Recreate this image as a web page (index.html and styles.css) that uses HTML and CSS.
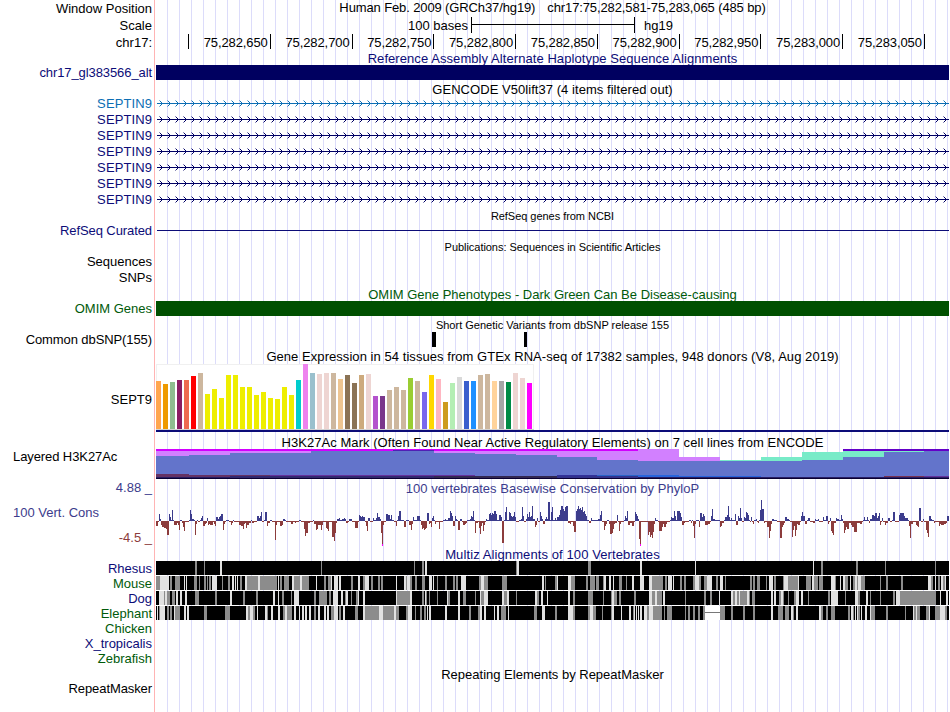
FILE: index.html
```
<!DOCTYPE html>
<html lang="en">
<head>
    <meta charset="UTF-8">
    <meta name="viewport" content="width=device-width, initial-scale=1.0">
    <title>Human chr17:75,282,581-75,283,065</title>
    <link rel="stylesheet" href="styles.css">
</head>
<body>
    <main class="browser">
        <div class="row ruler">
            <div class="label">Window Position</div>
            <div class="title position"><span>Human Feb. 2009 (GRCh37/hg19)</span><span>chr17:75,282,581-75,283,065 (485 bp)</span></div>
        </div>
        <div class="row ruler">
            <div class="label">Scale</div>
            <div class="scale"><span class="bases">100 bases</span><span class="bracket"></span><span>hg19</span></div>
        </div>
        <div class="row ruler">
            <div class="label">chr17:</div>
            <div class="ticks">
                <span class="first"></span>
                <span>75,282,650</span><span>75,282,700</span><span>75,282,750</span>
                <span>75,282,800</span><span>75,282,850</span><span>75,282,900</span>
                <span>75,282,950</span><span>75,283,000</span><span>75,283,050</span>
            </div>
        </div>

        <div class="title navy t-alt">Reference Assembly Alternate Haplotype Sequence Alignments</div>
        <div class="row item">
            <div class="label navy tight">chr17_gl383566_alt</div>
            <div class="bar bar-navy"></div>
        </div>

        <div class="title t-gencode">GENCODE V50lift37 (4 items filtered out)</div>
        <div class="row gene"><div class="label blue">SEPTIN9</div><svg class="arrows blue"></svg></div>
        <div class="row gene"><div class="label navy">SEPTIN9</div><svg class="arrows"></svg></div>
        <div class="row gene"><div class="label navy">SEPTIN9</div><svg class="arrows"></svg></div>
        <div class="row gene"><div class="label navy">SEPTIN9</div><svg class="arrows"></svg></div>
        <div class="row gene"><div class="label navy">SEPTIN9</div><svg class="arrows"></svg></div>
        <div class="row gene"><div class="label navy">SEPTIN9</div><svg class="arrows"></svg></div>
        <div class="row gene"><div class="label navy">SEPTIN9</div><svg class="arrows"></svg></div>

        <div class="title small t-refseq">RefSeq genes from NCBI</div>
        <div class="row item">
            <div class="label navy tight">RefSeq Curated</div>
            <div class="intron"></div>
        </div>

        <div class="title small t-pubs">Publications: Sequences in Scientific Articles</div>
        <div class="row pub"><div class="label">Sequences</div></div>
        <div class="row pub"><div class="label">SNPs</div></div>

        <div class="title green t-omim">OMIM Gene Phenotypes - Dark Green Can Be Disease-causing</div>
        <div class="row item">
            <div class="label green">OMIM Genes</div>
            <div class="bar bar-green"></div>
        </div>

        <div class="title small t-snp">Short Genetic Variants from dbSNP release 155</div>
        <div class="row item">
            <div class="label tight">Common dbSNP(155)</div>
            <div class="snps"><i class="snp"></i><i class="snp narrow"></i></div>
        </div>

        <div class="title t-gtex">Gene Expression in 54 tissues from GTEx RNA-seq of 17382 samples, 948 donors (V8, Aug 2019)</div>
        <div class="row gtex-row">
            <div class="label">SEPT9</div>
            <div class="gtex"><svg id="gtex" width="378" height="66"></svg></div>
        </div>

        <div class="title t-h3k">H3K27Ac Mark (Often Found Near Active Regulatory Elements) on 7 cell lines from ENCODE</div>
        <div class="row h3k-row">
            <div class="label left tight">Layered H3K27Ac</div>
            <svg id="h3k" width="793" height="30"></svg>
        </div>

        <div class="row cons-row">
            <div class="cons-labels">
                <span class="max">4.88 _</span>
                <span class="name">100 Vert. Cons</span>
                <span class="min">-4.5 _</span>
            </div>
            <div>
                <div class="title in-row phylo">100 vertebrates Basewise Conservation by PhyloP</div>
                <svg id="phylop" width="793" height="50"></svg>
            </div>
        </div>

        <div class="title navy t-multiz">Multiz Alignments of 100 Vertebrates</div>
        <div class="row species"><div class="label navy">Rhesus</div><svg id="rhesus" class="align"></svg></div>
        <div class="row species"><div class="label green">Mouse</div><svg id="mouse" class="align"></svg></div>
        <div class="row species"><div class="label navy">Dog</div><svg id="dog" class="align"></svg></div>
        <div class="row species"><div class="label green">Elephant</div><svg id="elephant" class="align"></svg></div>
        <div class="row species"><div class="label green">Chicken</div></div>
        <div class="row species"><div class="label navy">X_tropicalis</div></div>
        <div class="row species"><div class="label green">Zebrafish</div></div>

        <div class="title t-repeat">Repeating Elements by RepeatMasker</div>
        <div class="row item"><div class="label tight">RepeatMasker</div></div>
    </main>
    <script src="script.js"></script>
</body>
</html>
```
FILE: styles.css
```
body {
    margin: 0;
    background-color: #fff;
    font-family: 'Liberation Sans', Arial, sans-serif;
    font-size: 13px;
    color: #000;
}
.browser {
    width: 949px;
    height: 712px;
    overflow: hidden;
    background-image:
        linear-gradient(#ffb4b4, #ffb4b4),
        repeating-linear-gradient(to right, transparent 0, transparent 11px, #dcdcfa 11px, #dcdcfa 12px);
    background-size: 1px 712px, 793px 712px;
    background-position: 154px 0, 156px 0;
    background-repeat: no-repeat;
}
svg {
    display: block;
    shape-rendering: crispEdges;
}

/* rows */
.row {
    display: grid;
    grid-template-columns: 156px 793px;
}
.label {
    padding-right: 4px;
    text-align: right;
    white-space: nowrap;
}
.label.left {
    padding-left: 13px;
    text-align: left;
}
.label.tight {
    letter-spacing: -0.09px;
}
.ruler {
    height: 17px;
    line-height: 17px;
}
.item {
    height: 15px;
    line-height: 15px;
}
.gene {
    height: 16px;
    line-height: 17px;
}
.gene .label {
    letter-spacing: 0.1px;
}
.pub {
    height: 16px;
    line-height: 16px;
}
.species {
    height: 15px;
    line-height: 15px;
}

/* track titles */
.title {
    margin-left: 156px;
    text-align: center;
    white-space: nowrap;
    height: 15px;
    line-height: 15px;
}
.row .title {
    margin-left: 0;
}
.small {
    font-size: 11px;
    letter-spacing: -0.04px;
}
.position {
    display: flex;
    justify-content: center;
    gap: 12px;
    letter-spacing: -0.12px;
}
.t-alt { height: 14px; letter-spacing: 0.07px; }
.t-gencode { padding-top: 2px; height: 13px; letter-spacing: 0.05px; }
.t-refseq { padding-top: 2px; height: 14px; }
.t-pubs { padding-top: 2px; height: 14px; }
.t-omim { padding-top: 1px; height: 14px; }
.t-snp { padding-top: 2px; height: 14px; letter-spacing: 0; }
.t-gtex { padding-top: 2px; letter-spacing: 0.055px; }
.t-h3k { padding-top: 3px; height: 14px; letter-spacing: 0.05px; }
.t-multiz { height: 14px; letter-spacing: 0.1px; }
.t-repeat { padding-top: 1px; height: 14px; }

.navy { color: #0c0c78; }
.blue { color: #0c6eb4; }
.green { color: #005a0a; }
.phylo { color: #3c3c8c; }

/* base position */
.scale {
    display: flex;
    padding-left: 252px;
}
.bases {
    width: 63px;
    white-space: nowrap;
}
.bracket {
    box-sizing: border-box;
    width: 164px;
    height: 16px;
    margin-right: 9px;
    border-left: 1px solid #000;
    border-right: 1px solid #000;
    background: linear-gradient(#000, #000) 0 7px / 100% 1px no-repeat;
}
.ticks {
    display: flex;
    letter-spacing: -0.1px;
}
.ticks span {
    box-sizing: border-box;
    flex: none;
    width: 81.77px;
    height: 15px;
    padding-right: 2px;
    border-right: 1px solid #000;
    text-align: right;
}
.ticks .first {
    width: 33px;
}

/* items */
.bar-navy { background-color: #000060; }
.bar-green { background-color: #005000; }
.arrows {
    width: 793px;
    height: 16px;
    color: #000064;
}
.arrows.blue { color: #0c6eb4; }
.intron {
    height: 1px;
    margin: 7px 0 0 1px;
    background-color: #0c0c78;
}
.snps {
    display: flex;
    gap: 88px;
    padding-left: 276px;
}
.snp {
    width: 4px;
    background-color: #000;
}
.snp.narrow {
    width: 3px;
}

/* expression */
.gtex-row {
    height: 68px;
    line-height: 72px;
}
.gtex {
    height: 66px;
    border-bottom: 2px solid #0c0c78;
}

/* signal tracks */
.h3k-row {
    height: 30px;
    line-height: 16px;
}
.cons-row {
    height: 68px;
    color: #3c3c8c;
}
.cons-labels {
    display: flex;
    flex-direction: column;
    line-height: 16px;
    padding: 1px 4px 0 13px;
}
.cons-labels .max {
    text-align: right;
}
.cons-labels .name {
    margin-top: 9px;
}
.cons-labels .min {
    margin-top: 9px;
    text-align: right;
    color: #8c3c3c;
}
.in-row {
    padding: 2px 0 1px;
    letter-spacing: 0.03px;
}
.align {
    width: 793px;
    height: 14px;
}
```
FILE: script.js
```
const LEFT = 156;
const WIDTH = 793;

function draw(svg, tag, attrs) {
    const el = document.createElementNS('http://www.w3.org/2000/svg', tag);
    for (const key in attrs) {
        el.setAttribute(key, attrs[key]);
    }
    svg.appendChild(el);
}

function rect(svg, x, y, width, height, fill) {
    draw(svg, 'rect', { x, y, width, height, fill });
}

// strand arrows on the introns
document.querySelectorAll('.arrows').forEach(svg => {
    rect(svg, 1, 8, WIDTH - 1, 1, 'currentColor');
    for (let x = 6; x < WIDTH + 3; x += 8) {
        [[0, 8], [-1, 7], [-1, 9], [-2, 6], [-2, 10]].forEach(([dx, y]) => {
            rect(svg, x + dx, y, 1, 1, 'currentColor');
        });
        draw(svg, 'path', {
            d: `M${x - 3} 5h1v1h-1zM${x - 3} 11h1v1h-1z`,
            fill: 'currentColor', opacity: 0.45
        });
    }
});

// GTEx: bar height and tissue color
const gtex = [
    [48, '#ffa54f'], [45, '#ee9a00'], [47, '#8fbc8f'], [49, '#8b1c62'], [49, '#ee6a50'], [53, '#ff0000'],
    [56, '#cdb79e'], [35, '#eeee00'], [40, '#eeee00'], [31, '#eeee00'], [54, '#eeee00'], [54, '#eeee00'],
    [42, '#eeee00'], [42, '#eeee00'], [34, '#eeee00'], [37, '#eeee00'], [31, '#eeee00'], [30, '#eeee00'],
    [42, '#eeee00'], [34, '#eeee00'], [49, '#00cdcd'], [65, '#ee82ee'], [56, '#9ac0cd'], [55, '#eed5d2'],
    [56, '#eed5d2'], [56, '#cdb79e'], [50, '#eec591'], [54, '#8b7355'], [46, '#8b7355'], [54, '#cdaa7d'],
    [55, '#eed5d2'], [33, '#b452cd'], [33, '#7a378b'], [39, '#cdb79e'], [42, '#cdb79e'], [39, '#cdb79e'],
    [51, '#9acd32'], [48, '#cdb79e'], [37, '#7a67ee'], [54, '#ffd700'], [50, '#ffb6c1'], [27, '#cd9b1d'],
    [46, '#b4eeb4'], [52, '#d9d9d9'], [48, '#3a5fcd'], [48, '#1e90ff'], [54, '#cdb79e'], [55, '#cdb79e'],
    [48, '#ffd39b'], [48, '#a6a6a6'], [47, '#008b45'], [56, '#eed5d2'], [51, '#eed5d2'], [46, '#ff00ff']
];
const gtexSvg = document.getElementById('gtex');
rect(gtexSvg, 0, 0, 378, 66, '#f0f0f0');
rect(gtexSvg, 1, 1, 376, 64, '#ffffff');
rect(gtexSvg, 0, 65, 378, 1, '#d2d2d2');
gtex.forEach(([height, color], i) => rect(gtexSvg, i * 7, 65 - height, 5, height, color));

// H3K27Ac layers: x, x end, top, bottom, color
const h3k = [
    [156, 638, 449, 451, '#d200ff'], [156, 638, 451, 461, '#d280ff'],
    [638, 679, 449, 462, '#d280ff'], [679, 720, 457, 462, '#d280ff'],
    [720, 761, 460, 462, '#78ebc8'], [761, 802, 457, 462, '#78ebc8'],
    [802, 843, 452, 462, '#78ebc8'], [843, 924, 451, 462, '#78ebc8'],
    [843, 949, 449, 451, '#6400c8'],
    [156, 189, 456, 479, '#6374cb'], [189, 230, 455, 479, '#6374cb'], [230, 311, 453, 479, '#6374cb'],
    [311, 434, 451, 479, '#6374cb'], [434, 475, 453, 479, '#6374cb'], [475, 516, 454, 479, '#6374cb'],
    [516, 557, 455, 479, '#6374cb'], [557, 597, 457, 479, '#6374cb'], [597, 638, 460, 479, '#6374cb'],
    [638, 802, 461, 479, '#6374cb'], [802, 843, 460, 479, '#6374cb'], [843, 884, 457, 479, '#6374cb'],
    [884, 924, 452, 479, '#6374cb'], [924, 949, 451, 479, '#6374cb'],
    [393, 434, 450, 451, '#5020b4'],
    [156, 189, 474, 477, '#643264'], [189, 270, 475, 477, '#643264'], [270, 475, 475, 476, '#64329b'],
    [557, 597, 475, 476, '#32329b'], [597, 638, 475, 476, '#2864c8'],
    [638, 679, 475, 477, '#2864dc'], [679, 761, 476, 477, '#2864dc'],
    [884, 924, 476, 477, '#783250'], [924, 949, 476, 477, '#64329b'],
    [230, 434, 476, 478, '#32286e'], [434, 557, 476, 478, '#322850'], [557, 638, 476, 478, '#32328c'],
    [156, 230, 477, 478, '#281e64'],
    [638, 949, 477, 478, '#281e64'], [156, 949, 478, 479, '#0a0032']
];
const h3kSvg = document.getElementById('h3k');
h3k.forEach(([x, end, top, bottom, color]) => rect(h3kSvg, x - LEFT, top - 449, end - x, bottom - top, color));

// Splits "6k 10l" runs into [x, end, value], each block covers 200px
function readRuns(blocks) {
    const runs = [];
    blocks.forEach((block, i) => {
        const start = 150 + i * 200;
        block.trim().split(/\s+/).forEach(token => {
            const [, x, value] = token.match(/^(\d+)(.+)$/);
            runs.push([start + Number(x), value]);
        });
    });
    return runs.map(([x, value], i) => [x, i + 1 < runs.length ? runs[i + 1][0] : LEFT + WIDTH, value]);
}

// PhyloP scores in pixels, above or below the baseline
const phylop = [
    `6-5 8-1 9+7 10+2 11-4 12-6 14-7 16-8 17-14 19+7 20+4 21+1 22+11 23+1 24-4 27-2 28-4 29-9 30+1 32-2 33-6 34-10
    35-1 39+1 40+11 41+7 42+2 44+1 45-14 46-3 47+1 48-1 50+1 51+3 52+5 53-5 55-3 56-2 57+3 58-4 59-3 60-4 63-1
    64-3 65-5 66+4 68+2 69+4 70+5 71+7 73-9 74-3 75-1 76+1 79-1 81-4 82-2 83+1 84-1 89-4 91-5 93-8 94-3 95-2
    96-7 97-4 99-2 101+1 102-2 104-1 107+5 109+3 110+5 111+9 112-1 114+1 115+9 117-5 118-2 120+1 122-1 125-19
    126-4 127-1 130-5 132-4 133+2 135+1 136-1 141-3 143-1 145-2 146-1 149+1 151-1 154-8 155-15 156-12 158-2
    160-1 163+1 164-3 166-9 167-8 168-4 171-9 172-4 173-1 176-7 177-8 178-10 179-1 182-16 184-20 185-12 186-2
    187+2 189+3 190+1 192+2 194+3 195+2 196-2 198-1 199+2`,
    `0+2 2-1 5-7 8-1 9+6 10+5 11+4 12+5 13+4 15-1 16-5 17-10 18+3 20-1 23+3 24+1 26+3 27+8 28+4 30+2 31-12 32-25
    33-4 34-1 36+7 38+6 40+2 41+6 42+1 44-1 46-5 47+1 48+5 49+10 51+1 54-6 56+1 59-4 61-9 62-3 63+4 64+1 67+5
    70+1 71-4 72-8 73-7 74-9 75-8 76-7 77+8 79-3 80-2 81-6 82+3 83+5 84+1 85-3 86-1 89-8 90-1 93+1 95+2 96+1
    98+3 100+10 101+8 102+5 103-5 105+5 106+2 107+1 108-9 110+2 112-1 113-4 115-3 116-2 117+1 120+2 121+5 122+4
    123+10 124+1 125-12 126-2 128-1 129-7 130-13 131-5 132-2 133-10 134-4 135-1 136+2 137+1 139+7 140+8 141+6
    142+8 143+7 144+10 146+7 147+1 149+6 151+4 152-22 154+1 155+9 156+14 157+1 159+9 160+8 161+5 162+4 163+5
    164+9 165+4 166-1 169+1 171+2 172+14 173+5 174-1 176+2 177+7 178+4 179+9 180+4 181+5 182+15 183+2 185-6
    186-4 187+3 188-1 190+9 191+5 192+2 193-3 195+2 196+4 197+2 198+19`,
    `0+1 1+9 2+14 3+1 5+3 6+1 7+4 9+6 10+11 11+15 13+12 14+10 15+14 16+15 18-2 20-3 21-1 23-5 24-11 26+10 27+12
    28+15 29+12 30+13 31+11 32+14 33+9 34+10 35+7 36+5 37+1 39-2 41+3 42+1 48+2 50+6 51+10 52-1 54-9 55-5 56-3
    57+1 59-3 60-13 62-12 63-8 64-3 65-2 67+6 68-1 69-10 70-3 71-1 74+1 75+5 76+3 77+10 78-4 80-2 82-5 84-1
    85+9 86+7 87+5 88+2 89-18 90-25 91-1 98-14 99-11 100-16 101-14 102-17 103-11 104-3 105+3 106+1 108-1 109-10
    112-6 113-3 114-6 116-3 117-1 120+1 121+4 122+3 124+10 125+5 126+1 127+10 130+8 131+4 132-4 134-2 135-1
    139+1 141-2 142+1 143-5 144-17 145-3 146+1 149-6 150+8 152+4 153+7 154+5 155-4 158-3 160-1 161+5 162+12
    163+2 165+1 170-6 171-5 172-2 174+1 175+4 177+6 178+15 179+4 180+1 181+3 182+1 185+7 186-4 188+5 189+3
    190+13 191+3 192-1 194+4 195+3 196+9 197+8 198+6 199+1`,
    `0-1 1+4 2-1 3-3 4+1 6+2 7-1 8-2 9+1 10+11 11+21 12+12 14-2 15-1 17-6 19-17 20-10 21-3 22+2 24+1 27-1 30-17
    32-6 33-4 34-2 35+4 37+2 39+1 40-1 42-16 43-9 44-5 45-15 46-9 47-3 48-4 50-1 51+5 52+9 53+5 55-3 57+1 58+3
    60-1 63-2 65+2 66+1 68+2 69-1 73+4 74+1 76+5 78-3 79-1 80+3 81-10 82-12 83-14 84-2 86+3 87+2 89+1 91+6
    92+2 93-2 94-12 95-9 96-6 97-8 99-2 101-4 102-6 104-11 107-2 110-3 112-1 113+1 114+4 115+1 117+4 118+1
    119-2 120+2 122+6 124+5 125+8 127+3 128+5 129+8 130-4 131-1 132+3 133-1 135-4 136-2 138+3 140-1 142+1
    143+9 145-1 149+6 150+8 154+5 155+3 158+1 159-5 160-17 161-3 163-1 166-4 167-5 168-6 169+13 171-1 173+2
    174-1 176-9 177-12 178-16 179+5 181+2 182+1 184-2 185-1 189-5 190-3 191-4 194-3 196-2 197+5`
];
const phylopSvg = document.getElementById('phylop');
const base = 24;
readRuns(phylop).forEach(([x, end, value]) => {
    const v = Number(value);
    if (v > 0) {
        rect(phylopSvg, x - LEFT, base - v, end - x, v, '#3c3c8c');
    } else {
        rect(phylopSvg, x - LEFT, base, end - x, -v, '#8c3c3c');
    }
    // clipped below the minimum
    if (v <= -25) {
        rect(phylopSvg, x - LEFT, base + 23, end - x, 2, '#ff00ff');
    }
});

// alignment quality: k aligned, g partial, l low, n no sequence
const shades = { k: '#000000', g: '#8c8c8c', l: '#e1e1e1' };
const species = {
    rhesus: [
        '6k 45g 47k 54g 55k 70l 72k 171g 172k',
        '0k 64g 65k 72g 74k 75l 77k 166g 167l 169k',
        '0k 38g 41k 90l 92k 145l 146k',
        '0k 63l 64k 71g 73k 106g 108k 135g 136k 185g 186k'
    ],
    mouse: [
        `6g 10l 19k 20g 22k 25g 30k 34l 35k 36l 37k 44g 47k 49g 50k 54g 56k 57g 58k 59g 61k 62l 67k 72g 73k 78g
        80k 82l 84k 85l 86k 87l 88k 90g 92k 95l 97g 108l 110g 127k 128l 129k 130g 132k 134g 139k 142l 144g 150l
        152g 159k 166l 167k 174g 176k 178g 181l 182k 184l 188k 189l 191k`,
        `0k 1g 3k 8l 10k 13g 15l 19k 21g 23k 28g 30k 31g 33k 46l 47k 54l 56g 57l 60g 62k 65g 67k 72g 75k 79l 82k
        83l 84k 87g 88k 95g 97k 103g 105k 106g 108k 111l 116k 129g 131l 134g 138k 152g 157k 192l 194k 195g 196k`,
        `0k 5g 7l 8k 18l 21g 25k 36g 38k 40g 45k 46g 49k 53g 54l 56k 59l 61k 63l 64k 69g 72k 76g 77k 82l 84k 90l
        94k 99l 102g 113k 115g 117k 118l 122k 123l 124k 130g 132k 134g 136k 143g 145l 149g 151k 154g 157l 162k
        166g 168k 170l 173k 175g 176k`,
        `0g 2k 3g 5k 7g 10k 16g 17k 19l 23k 24g 26k 33g 34l 38g 48l 49k 56g 61k 62l 64g 68k 69g 73k 81l 85g 86k
        90l 91k 93l 95g 98k 100l 101k 103g 105l 107g 108l 111g 115k 130g 131k 136g 138k 151g 153k 178l 181g 183k
        185l 186k 188g 190k 191l 193g 195l 196k`
    ],
    dog: [
        `6k 9l 14g 15l 17g 20k 22g 25k 26l 28k 30l 32k 35l 37k 45g 49k 65g 67k 80l 82k 93g 95k 106g 108k 123l 125k
        128l 129k 132g 134k 141g 142k 144l 149k 164g 166k 169g 177k 179g 181k 183l 188k 191l 193k 195g 196l 198k`,
        `0k 1g 2k 6g 8l 9k 13l 15k 46l 47g 60l 62k 72g 74k 75l 76g 77k 79g 80k 87g 88k 97l 98g 100k 108l 110k
        113g 116k 125g 126k 128k 130l 131g 134l 138k 152l 154g 157l 159k 166g 167k 185l 187g 189k 191l 193k 197l 198k`,
        `0k 18l 20k 23g 25k 38g 43k 53g 54k 61g 62l 64g 67k 69g 71k 84g 86k 99l 102g 105l 107g 112k 113l 115k 135g
        136k 154g 156k 160g 162k 169l 170k 181l 183g 185l 187g 189l 190g 197l 199g`,
        `0k 2g 5k 21l 23k 24l 26k 29g 31l 33g 34k 38g 39k 44g 46l 49k 51l 53k 58g 59k 78g 80k 81l 88k 95g 96k
        105l 108g 110k 116l 118k 120g 121k 130g 131k 143g 145k 146l 150g 186k 190l 191k 196l 198k`
    ],
    elephant: [
        `6k 7l 8k 9g 10l 15k 17g 19k 20g 22k 24l 25g 30k 34l 36k 37l 39k 54g 57k 75g 80k 96l 98g 100l 103g 105k
        107l 108k 115l 117g 118k 121l 123k 128l 130k 133g 135l 137g 142k 144l 146k 149l 150k 152l 154k 155l 157k
        159l 161k 164g 166k 168l 170k 174l 176k 177l 179k 181g 184l 188k 189g 191k 193l 195k`,
        `0k 5g 8k 13l 15g 29l 33g 44l 46g 49k 56g 58l 62k 65g 66k 70g 72k 74g 76k 77l 78k 79l 81k 95l 97k 108l
        110k 119g 121k 128g 130l 132k 134l 136k 144l 145k 147l 149k 151g 153g 156k 158l 159k 184g 187k 192l 195k`,
        `0k 5g 7k 18l 23g 25k 38g 40l 43g 46k 52g 53k 61g 62l 64k 71l 72k 79l 81k 83g 84l 85k 86l 87k 88l 89k 90l
        92k 94l 97g 99l 103g 112k 114g 115k 117g 122k 135g 136k 138g 140k 143g 145k 148g 150k 153g 155n 170g 175k
        181g 183k 193g 195k`,
        `0k 3g 5k 21l 23k 28g 33k 35g 39k 41l 43g 44k 46l 48k 69l 71g 73k 76g 78k 81g 85k 98g 100k 101l 103g 104k
        105l 106k 107l 108g 110k 111l 112k 115l 117k 120l 121g 125k 136g 138k 155g 156k 163l 164g 166l 167g 170k
        176g 179l 180k 185g 190l 195g 197k`
    ]
};
for (const name in species) {
    const svg = document.getElementById(name);
    readRuns(species[name]).forEach(([x, end, shade]) => {
        if (shade === 'n') {
            rect(svg, x - LEFT, 0, end - x, 14, '#ffffff');
            rect(svg, x - LEFT, 6, end - x, 1, '#787878');
        } else {
            rect(svg, x - LEFT, 0, end - x, 14, shades[shade]);
        }
    });
}
```
